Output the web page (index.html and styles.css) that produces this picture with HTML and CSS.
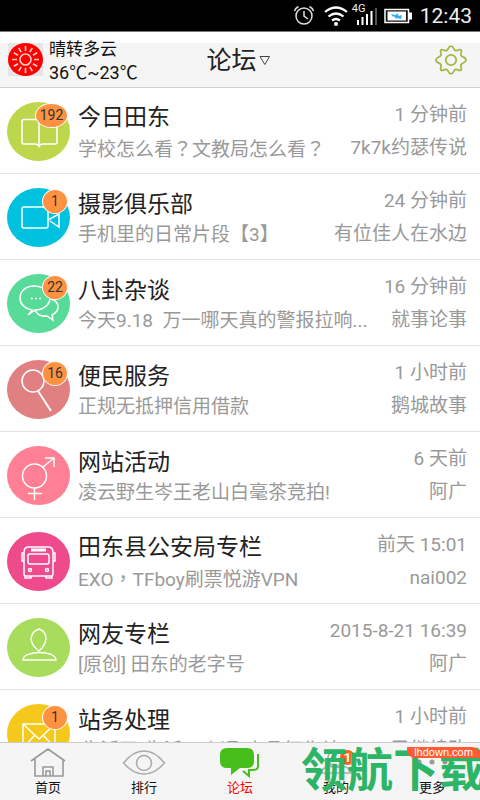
FILE: index.html
```html
<!DOCTYPE html>
<html lang="zh-CN">
<head>
<meta charset="utf-8">
<meta name="viewport" content="width=device-width, initial-scale=1">
<title>论坛</title>
<link rel="stylesheet" href="styles.css">
</head>
<body>
<div class="status">
  <svg width="22" height="22" viewBox="0 0 22 22" fill="none" stroke="#ddd" stroke-width="1.5"><circle cx="11" cy="11" r="8"/><path d="M11 6v5l4 3M1.500 6q1-3 4-4.500M20.500 6q-1-3-4-4.500"/></svg>
  <svg class="wifi" width="24" height="22" viewBox="0 0 24 22" fill="none" stroke="#fff" stroke-width="2.200"><path d="M1 7Q12-2 23 7M4.500 11.500q7.500-6 15 0M8 15.500q4-3 8 0"/><circle cx="12" cy="19" r="2" fill="#fff" stroke="none"/></svg>
  <span class="signal"><span class="net">4G</span><svg width="25" height="22" viewBox="0 0 25 22" stroke="#fff" stroke-width="2"><path d="M5 15v5M9.500 12v8M14 9v11M18.500 6v14"/><path d="M23 3v17" stroke="#555"/></svg></span>
  <svg class="battery" width="28" height="16" viewBox="0 0 28 16"><path d="M1 1.500h23.500v13H1z" fill="#111" stroke="#fff" stroke-width="1.500"/><path d="M25 4.500h3v7h-3z" fill="#fff"/><path d="M3.500 3.500H22v9H3.500z" fill="#fff"/><path d="M7 6l5 1 1-2 2 3 3-1-1 4-4-1-1 1-2-3-1 1z" fill="#35aef0"/></svg>
  <span class="clock">12:43</span>
</div>

<header class="header">
  <div class="weather">
    <svg class="sun" width="35" height="33" viewBox="0 0 35 33" fill="none" stroke="#fbd0c8" stroke-width="1.600"><ellipse cx="17.500" cy="16.500" rx="17.500" ry="16.500" fill="#f00" stroke="none"/><circle cx="17.500" cy="16.500" r="5.500"/><path d="M17.500 8V3M17.500 25v5M9 16.500H4M26 16.500h5M13.200 9.100l-2.500-4.300M21.800 9.100l2.500-4.300M13.200 23.900l-2.500 4.300M21.800 23.900l2.500 4.300M10.100 12.200L5.800 9.700M24.900 12.200l4.300-2.500M10.100 20.800l-4.300 2.500M24.900 20.800l4.300 2.500"/></svg>
    <p class="forecast">晴转多云<br><span class="degrees">36℃~23℃</span></p>
  </div>
  <h1 class="heading"><button class="picker" type="button">论坛<svg width="12" height="11" viewBox="0 0 12 11" fill="none" stroke="#444"><path d="M1 1.500h9.500L5.800 9.500z"/></svg></button></h1>
  <button class="settings" type="button" aria-label="设置"><svg width="32" height="30" viewBox="0 0 32 30" fill="none" stroke="#a5b748" stroke-width="1.800"><circle cx="16" cy="15" r="5.200"/><path d="M16 1.200C19 1.200 18.500 5 20.500 5.600S24.500 3.500 26 5s-.8 3.600 0 5.300S31 12 31 15s-4 2.700-5 4.700 1.500 3.800 0 5.300-3.500-1.200-5.500-.6S19 28.800 16 28.800s-2.500-3.800-4.500-4.400S7.500 26.500 6 25s.8-3.600 0-5.300S1 18 1 15s4-2.700 5-4.700S4.500 6.500 6 5s3.500 1.200 5.500.6S13 1.200 16 1.200z"/></svg></button>
</header>

<main class="forums">
  <a class="row" href="#">
    <span class="avatar lime"><svg viewBox="0 0 63 59"><path d="M32 19q-1-1.500-3-1.500H17q-2 0-2 2V40q0 2 2 2h11q3 0 4 2.500Q33 42 36 42h12q2 0 2-2V19.500q0-2-2-2H36q-3 0-4 1.500v25"/></svg><span class="count wide">192</span></span>
    <span class="info"><strong>今日田东</strong><span class="last">学校怎么看<span class="mark" lang="zh-TW">？</span>文教局怎么看<span class="mark" lang="zh-TW">？</span></span></span>
    <span class="meta"><time>1 分钟前</time><span>7k7k约瑟传说</span></span>
  </a>
  <a class="row" href="#">
    <span class="avatar cyan"><svg viewBox="0 0 63 59"><rect x="15" y="19" width="26" height="21" rx="2"/><path d="M41 32l11-6v13l-9-6"/></svg><span class="count">1</span></span>
    <span class="info"><strong>摄影俱乐部</strong><span class="last">手机里的日常片段【3】</span></span>
    <span class="meta"><time>24 分钟前</time><span>有位佳人在水边</span></span>
  </a>
  <a class="row" href="#">
    <span class="avatar mint"><svg viewBox="0 0 63 59"><path d="M25 36c-7-1-12-6-12-12 0-7 6-12 14-12s16 5 16 12-7 12-15 12l-7 5q3-3 4-5zM44 25q7 2 7 8 0 5-6 8l1 5-6-4q-9 1-12-6"/><path d="M24 24.500h2m2 0h2m2 0h2"/></svg><span class="count">22</span></span>
    <span class="info"><strong>八卦杂谈</strong><span class="last">今天9.18  万一哪天真的警报拉响...</span></span>
    <span class="meta"><time>16 分钟前</time><span>就事论事</span></span>
  </a>
  <a class="row" href="#">
    <span class="avatar coral"><svg viewBox="0 0 63 59"><circle cx="26" cy="21" r="11"/><path d="M31 31l13 20" stroke-width="2"/></svg><span class="count">16</span></span>
    <span class="info"><strong>便民服务</strong><span class="last">正规无抵押信用借款</span></span>
    <span class="meta"><time>1 小时前</time><span>鹅城故事</span></span>
  </a>
  <a class="row" href="#">
    <span class="avatar pink"><svg viewBox="0 0 63 59"><circle cx="27.500" cy="30" r="12"/><path d="M36 21l11-9M38 12h9v9M27.500 42v12M21 47.500h14"/></svg></span>
    <span class="info"><strong>网站活动</strong><span class="last">凌云野生岑王老山白毫茶竞拍!</span></span>
    <span class="meta"><time>6 天前</time><span>阿广</span></span>
  </a>
  <a class="row" href="#">
    <span class="avatar rose"><svg viewBox="0 0 63 59"><path d="M17 42V20q0-5 5-5h19q5 0 5 5v22q0 2-2 2H19q-2 0-2-2zM18 44v2h6v-2M39 44v2h6v-2M17 21h-2v8h2M46 21h2v8h-2"/><rect x="21" y="22" width="21" height="10" rx="2"/><path d="M24 18h15" stroke-width="3"/><circle cx="23" cy="38" r="1.500"/><circle cx="40" cy="38" r="1.500"/></svg></span>
    <span class="info"><strong>田东县公安局专栏</strong><span class="last">EXO<span class="mark" lang="zh-TW">，</span>TFboy刷票悦游VPN</span></span>
    <span class="meta"><time>前天 15:01</time><span>nai002</span></span>
  </a>
  <a class="row" href="#">
    <span class="avatar green"><svg viewBox="0 0 63 59"><path d="M32 11q7 2 7 10-1 7-7 12-7-5-8-12 1-8 8-10zM16 42c0-10 33-10 33 0z"/></svg></span>
    <span class="info"><strong>网友专栏</strong><span class="last">[原创] 田东的老字号</span></span>
    <span class="meta"><time>2015-8-21 16:39</time><span>阿广</span></span>
  </a>
  <a class="row" href="#">
    <span class="avatar gold"><svg viewBox="0 0 63 59"><path d="M16 20h32v24H16zl16 15 16-15M16 44l12-13M48 44L36 31"/></svg><span class="count">1</span></span>
    <span class="info"><strong>站务处理</strong><span class="last">'生活网"生活一点通"商品征集站</span></span>
    <span class="meta"><time>1 小时前</time><span>已继续改</span></span>
  </a>
</main>

<nav class="tabs">
  <a class="tab" href="#"><svg width="44" height="32" viewBox="0 0 44 32" fill="none" stroke="#999" stroke-width="1.600"><path d="M5 15L22 3l17 12M9 13v17h28V13M17 30v-9h10v9M20 30v-5h4v5"/></svg>首页</a>
  <a class="tab" href="#"><svg width="44" height="32" viewBox="0 0 44 32" fill="none" stroke="#aaa" stroke-width="1.500"><path d="M1.500 17Q11 5 22 5t20.500 12Q33 28 22 28T1.500 17z"/><circle cx="22" cy="17" r="7.500"/></svg>排行</a>
  <a class="tab current" href="#"><svg width="44" height="32" viewBox="0 0 44 32"><path d="M9 2h20q7 0 7 7v6q0 7-7 7h-7l-9 7v-7H9q-7 0-7-7V9q0-7 7-7z" fill="#46be1c"/><path d="M40 8v12q0 4-5 4h-4v6l-6-5" fill="none" stroke="#46be1c" stroke-width="2"/></svg>论坛</a>
  <a class="tab" href="#"><svg width="44" height="32" viewBox="0 0 44 32" fill="none" stroke="#aaa" stroke-width="1.500"><circle cx="22" cy="12" r="8"/><path d="M7 27q0-5 9-7 6 3 12 0 9 2 9 7z"/></svg><span class="alert">1</span>我的</a>
  <a class="tab" href="#"><svg width="44" height="32" viewBox="0 0 44 32" fill="#999"><circle cx="9" cy="16" r="2.500"/><circle cx="22" cy="16" r="2.500"/><circle cx="35" cy="16" r="2.500"/></svg>更多</a>
</nav>

<div class="brand">领航下载<span class="site">lhdown.com</span></div>
</body>
</html>
```

FILE: styles.css
```css
* { box-sizing: border-box; }
body {
  margin: 0;
  height: 100vh;
  display: flex;
  flex-direction: column;
  overflow: hidden;
  position: relative;
  background: #fff;
  color: #222;
  font-family: Roboto, "Noto Sans CJK SC", sans-serif;
}
a { color: inherit; text-decoration: none; }
button { padding: 0; border: 0; background: none; color: inherit; font: inherit; }
svg { display: block; flex: none; }

.status {
  flex: none;
  height: 32px;
  padding-right: 8px;
  display: flex;
  align-items: center;
  justify-content: flex-end;
  background: #000;
  border-bottom: 1px solid #777;
  color: #eee;
}
.wifi { margin-left: 9px; }
.signal { position: relative; margin-left: 5px; }
.net { position: absolute; top: -2px; left: -1px; font-size: 11px; line-height: 12px; }
.battery { margin-left: 6px; }
.clock { margin-left: 8px; font-size: 21px; }

.header {
  flex: none;
  height: 56px;
  padding: 0 13px 0 8px;
  display: grid;
  grid-template-columns: 1fr auto 1fr;
  align-items: center;
  background: linear-gradient(#fff 11px, #f5f5f5 11px);
  border-bottom: 1px solid #d0d0d0;
}
.weather { display: flex; align-items: center; gap: 6px; }
.sun { background: #e6e6e6; }
.forecast { margin: 0; padding-top: 4px; font-size: 17px; line-height: 23px; color: #111; white-space: nowrap; }
.degrees { font-size: 18px; }
.heading { margin: 0; padding: 2px 0 0 2px; font-size: 25px; font-weight: 400; line-height: 32px; }
.picker { display: flex; align-items: center; gap: 2px; }
.settings { justify-self: end; }

.forums { flex: 1; min-height: 0; overflow: hidden; }
.row {
  height: 86px;
  padding: 0 13px 0 7px;
  display: flex;
  align-items: center;
  border-bottom: 1px solid #e4e4e4;
}
.avatar { position: relative; flex: none; width: 63px; height: 59px; margin-top: 2px; border-radius: 50%; }
.avatar svg { width: 63px; height: 59px; fill: none; stroke: #fff; stroke-width: 1.5; }
.lime { background: #bdd74c; }
.cyan { background: #00c1e0; }
.mint { background: #58da98; }
.coral { background: #e08080; }
.pink { background: #ff8095; }
.rose { background: #ef4a8c; }
.green { background: #a8dc5c; }
.gold { background: #f5c91c; }
.count {
  position: absolute;
  top: 1px;
  right: 2px;
  width: 26px;
  height: 25px;
  border: 1px solid #fff;
  border-radius: 50%;
  background: #ff9240;
  color: #333;
  font-size: 14px;
  line-height: 23px;
  text-align: center;
}
.wide { width: 33px; }
.info { flex: 1; min-width: 0; margin-left: 8px; padding-top: 4px; }
.info strong { display: block; font-size: 23px; font-weight: 400; line-height: 32px; }
.last, .meta { color: #999; font-size: 19px; line-height: 28px; white-space: pre; }
.last { display: block; }
.mark { font-family: "Noto Sans CJK TC", sans-serif; }
.meta { flex: none; display: grid; gap: 5px; padding-top: 2px; text-align: right; }

.tabs {
  flex: none;
  height: 58px;
  display: flex;
  background: #f5f5f5;
  border-top: 1px solid #ccc;
}
.tab {
  position: relative;
  flex: 1;
  padding-top: 3px;
  display: flex;
  flex-direction: column;
  align-items: center;
  font-size: 13px;
  line-height: 20px;
  color: #111;
}
.current { color: #f00; }
.alert {
  position: absolute;
  top: 7px;
  left: 52px;
  width: 15px;
  height: 15px;
  border-radius: 50%;
  background: #f4661b;
  color: #fff;
  font-weight: 700;
  line-height: 15px;
  text-align: center;
}

.brand {
  position: absolute;
  right: -5px;
  bottom: 3px;
  color: #2cb566;
  font-size: 46px;
  font-weight: 700;
  line-height: 54px;
  white-space: nowrap;
  pointer-events: none;
}
.site {
  position: absolute;
  top: 4px;
  right: 5px;
  width: 73px;
  border-radius: 0 8px 0 8px;
  background: #ff5b35;
  color: #fff;
  font: 11px/11px "Liberation Sans", sans-serif;
  text-align: center;
}
```
